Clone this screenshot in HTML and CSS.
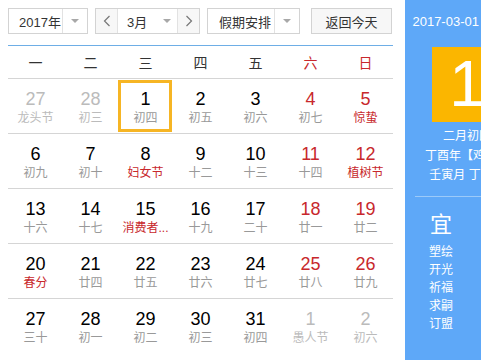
FILE: index.html
```html
<!DOCTYPE html>
<html lang="zh-CN">
  <head>
    <meta charset="UTF-8" />
    <title>万年历</title>
    <link rel="stylesheet" href="styles.css">
  </head>
  <body>
    <div class="wrap">
      <div class="main">
        <!-- Controls -->
        <div class="controls">
          <div class="select year">
            <span class="select-text">2017年</span>
            <span class="select-arrow"><i class="tri"></i></span>
          </div>
          <div class="select month">
            <span class="nav">
              <svg width="8" height="12" viewBox="0 0 8 12"><polyline points="6.5,1 1.5,6 6.5,11" fill="none" stroke="#777" stroke-width="1.2"/></svg>
            </span>
            <span class="select-text">3月</span>
            <span class="mini-arrow"><i class="tri"></i></span>
            <span class="nav">
              <svg width="8" height="12" viewBox="0 0 8 12"><polyline points="1.5,1 6.5,6 1.5,11" fill="none" stroke="#777" stroke-width="1.2"/></svg>
            </span>
          </div>
          <div class="select holiday">
            <span class="select-text">假期安排</span>
            <span class="select-arrow"><i class="tri"></i></span>
          </div>
          <button class="today-btn">返回今天</button>
        </div>

        <!-- Calendar -->
        <div class="board">
          <div class="week">
            <span>一</span><span>二</span><span>三</span><span>四</span><span>五</span>
            <span class="red">六</span><span class="red">日</span>
          </div>
          <div class="days" id="days"></div>
        </div>
      </div>

      <!-- Side panel -->
      <div class="panel">
        <div class="panel-date">2017-03-01 星期三</div>
        <div class="big-day">1</div>
        <div class="lunar">
          <div>二月初四</div>
          <div>丁酉年【鸡年】</div>
          <div>壬寅月 丁巳日</div>
        </div>
        <div class="yiji">
          <div class="yj-col">
            <div class="yj-title">宜</div>
            <div>塑绘</div>
            <div>开光</div>
            <div>祈福</div>
            <div>求嗣</div>
            <div>订盟</div>
          </div>
          <div class="yj-col">
            <div class="yj-title">忌</div>
            <div>出火</div>
            <div>入宅</div>
            <div>移徙</div>
          </div>
        </div>
      </div>
    </div>

    <script>
      // [day, lunar text, flags]  o = other month, w = weekend, f = festival, t = today
      const cells = [
        ["27", "龙头节", "o"], ["28", "初三", "o"], ["1", "初四", "t"], ["2", "初五", ""],
        ["3", "初六", ""], ["4", "初七", "w"], ["5", "惊蛰", "wf"],
        ["6", "初九", ""], ["7", "初十", ""], ["8", "妇女节", "f"], ["9", "十二", ""],
        ["10", "十三", ""], ["11", "十四", "w"], ["12", "植树节", "wf"],
        ["13", "十六", ""], ["14", "十七", ""], ["15", "消费者...", "f"], ["16", "十九", ""],
        ["17", "二十", ""], ["18", "廿一", "w"], ["19", "廿二", "w"],
        ["20", "春分", "f"], ["21", "廿四", ""], ["22", "廿五", ""], ["23", "廿六", ""],
        ["24", "廿七", ""], ["25", "廿八", "w"], ["26", "廿九", "w"],
        ["27", "三十", ""], ["28", "初一", ""], ["29", "初二", ""], ["30", "初三", ""],
        ["31", "初四", ""], ["1", "愚人节", "o"], ["2", "初六", "o"],
      ];

      const daysEl = document.getElementById("days");
      cells.forEach((c, i) => {
        const cell = document.createElement("div");
        cell.classList.add("day");
        if (c[2].includes("o")) cell.classList.add("other");
        if (c[2].includes("w")) cell.classList.add("weekend");
        if (c[2].includes("f")) cell.classList.add("fest");
        if (c[2].includes("t")) cell.classList.add("today");
        if (i >= 28) cell.classList.add("last");
        cell.innerHTML = `<span class="num">${c[0]}</span><span class="lun">${c[1]}</span>`;
        daysEl.appendChild(cell);
      });
    </script>
  </body>
</html>
```

FILE: styles.css
```css
/* General */
body {
  margin: 0;
  font-family: "Liberation Sans", Arial, "Noto Sans CJK SC", sans-serif;
  color: #000;
  background: #fff;
  overflow: hidden;
}

.wrap {
  display: flex;
  width: 481px;
  height: 360px;
  overflow: hidden;
}

.main {
  flex: 0 0 397px;
  padding: 8px 0 0 8px;
}

/* Controls */
.controls {
  display: flex;
  height: 26px;
}

.select {
  display: flex;
  box-sizing: border-box;
  height: 26px;
  border: 1px solid #d3d3d3;
  background: #fff;
  font-size: 13px;
  color: #333;
  align-items: stretch;
}

.select-text {
  flex: 1;
  display: flex;
  align-items: center;
  padding-left: 10px;
}

.select-arrow {
  width: 24px;
  border-left: 1px solid #e2e2e2;
  display: flex;
  align-items: center;
  justify-content: center;
}

.tri {
  width: 0;
  height: 0;
  border-left: 4px solid transparent;
  border-right: 4px solid transparent;
  border-top: 4px solid #a8a8a8;
}

.year {
  width: 80px;
}

.month {
  width: 105px;
  margin-left: 7px;
}

.month .select-text {
  padding-left: 9px;
}

.nav {
  width: 21px;
  background: #f7f7f7;
  display: flex;
  align-items: center;
  justify-content: center;
}

.nav:first-child {
  border-right: 1px solid #e2e2e2;
}

.nav:last-child {
  border-left: 1px solid #e2e2e2;
}

.mini-arrow {
  width: 20px;
  display: flex;
  align-items: center;
  justify-content: center;
}

.holiday {
  width: 93px;
  margin-left: 7px;
}

.holiday .select-text {
  padding-left: 11px;
}

.today-btn {
  width: 81px;
  height: 26px;
  margin-left: 11px;
  border: 1px solid #d3d3d3;
  background: #f7f7f7;
  font-family: inherit;
  font-size: 13px;
  color: #333;
  padding: 0;
}

/* Calendar board */
.board {
  width: 385px;
  margin-top: 11px;
  border-top: 1px solid #6eaee6;
}

.week {
  display: grid;
  grid-template-columns: repeat(7, 1fr);
  height: 32px;
  align-items: center;
  border-bottom: 1px solid #d5d5d5;
  font-size: 14px;
  color: #333;
  text-align: center;
}

.week .red {
  color: #c8282c;
}

.days {
  display: grid;
  grid-template-columns: repeat(7, 1fr);
}

.day {
  box-sizing: border-box;
  height: 55px;
  border-bottom: 1px solid #d5d5d5;
  display: flex;
  flex-direction: column;
  align-items: center;
  padding-top: 10px;
  position: relative;
}

.day.last {
  border-bottom: none;
}

.num {
  font-size: 18px;
  line-height: 20px;
  color: #000;
}

.lun {
  font-size: 12px;
  line-height: 18px;
  color: #999;
}

.day.weekend .num {
  color: #c8282c;
}

.day.fest .lun {
  color: #c8282c;
}

.day.other .num,
.day.other .lun {
  color: #bbb;
}

.day.today::after {
  content: "";
  position: absolute;
  left: 0;
  right: 1px;
  top: 1px;
  bottom: 1px;
  border: 3px solid #f6b524;
}

/* Side panel */
.panel {
  flex: 0 0 124px;
  background: #5ea8f8;
  color: #fff;
  text-align: center;
  padding-top: 13px;
}

.panel-date {
  font-size: 13px;
  line-height: 18px;
  white-space: nowrap;
}

.big-day {
  width: 70px;
  height: 75px;
  margin: 16px auto 0;
  background: #fbb600;
  font-size: 64px;
  line-height: 75px;
}

.lunar {
  margin-top: 5px;
  font-size: 12px;
  line-height: 19.5px;
  white-space: nowrap;
}

.yiji {
  display: flex;
  margin: 10px 10px 0;
  border-top: 1px solid #9ccaf9;
  padding-top: 16px;
}

.yj-col {
  flex: 1;
  font-size: 12px;
  line-height: 18px;
}

.yj-title {
  font-size: 22px;
  line-height: 24px;
  margin-bottom: 6px;
}
```
